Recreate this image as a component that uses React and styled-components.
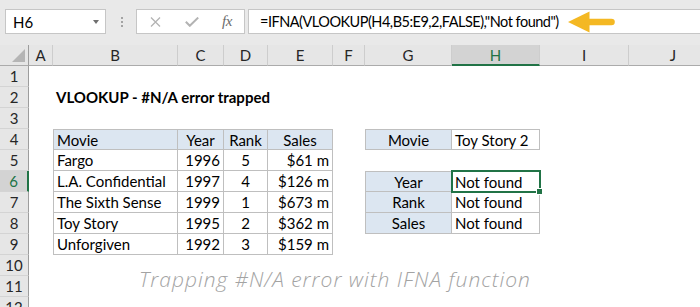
import React from "react";
import styled, { createGlobalStyle, css } from "styled-components";

const GREEN = "#217346";
const LINE = "#bfbfbf";
const HEAD_BG = "#dce6f1";

const GlobalStyle = createGlobalStyle`
  html, body { margin: 0; padding: 0; background: #fff; }
  body {
    width: 700px; height: 307px; overflow: hidden;
    font-family: Lato, "Noto Sans", sans-serif; color: #000;
  }
  #root { width: 700px; height: 307px; overflow: hidden; }
`;

const Window = styled.div`
  display: flex;
  flex-direction: column;
  width: 700px;
  height: 307px;
  overflow: hidden;
  background: #fff;
`;

const FormulaBar = styled.div`
  display: flex;
  align-items: flex-start;
  flex-shrink: 0;
  height: 45px;
  box-sizing: border-box;
  padding: 9px 0 0 5px;
  background: #e9e9e9;
`;

const NameBox = styled.div`
  display: flex;
  align-items: center;
  justify-content: space-between;
  width: 101px;
  height: 25px;
  box-sizing: border-box;
  padding: 0 6px 0 7px;
  border: 1px solid #c6c6c6;
  background: #fff;
  font-size: 15px;
`;

const Caret = styled.span`
  width: 0;
  height: 0;
  border-left: 3.5px solid transparent;
  border-right: 3.5px solid transparent;
  border-top: 4px solid #6f6f6f;
`;

const Grip = styled.div`
  display: flex;
  flex-direction: column;
  gap: 2px;
  margin: 8px 13px 0 15px;
`;

const GripDot = styled.span`
  width: 2px;
  height: 2px;
  background: #a3a3a3;
`;

const FxBox = styled.div`
  display: flex;
  align-items: center;
  width: 109px;
  height: 25px;
  box-sizing: border-box;
  padding-left: 13px;
  gap: 24px;
  border: 1px solid #c6c6c6;
  background: #fff;
  & > :last-child { margin-left: -1px; }
`;

const FxLabel = styled.span`
  font-family: "Liberation Serif", serif;
  font-style: italic;
  font-size: 15px;
  color: #6b6b6b;
  letter-spacing: -0.5px;
`;

const FormulaInput = styled.div`
  display: flex;
  align-items: center;
  gap: 9px;
  flex: 1;
  height: 25px;
  box-sizing: border-box;
  margin-left: 3px;
  padding-left: 11px;
  border: 1px solid #c6c6c6;
  border-right: none;
  background: #fff;
  font-size: 14.5px;
  letter-spacing: -0.5px;
  white-space: nowrap;
`;

const Sheet = styled.div`
  display: grid;
  grid-template-columns: 29px 24px 125px 46px 44px 65px 32px 87px 88px 89px 89px;
  grid-template-rows: 21px repeat(12, 21px);
  font-size: 15px;
  line-height: 21px;
`;

const Corner = styled.div`
  background: #e6e6e6;
  border-right: 1px solid #9d9d9d;
  border-bottom: 1px solid #ababab;
  box-sizing: border-box;
  display: flex;
  align-items: flex-end;
  justify-content: flex-end;
  padding: 0 3px 3px 0;
`;

const CornerTri = styled.span`
  width: 0;
  height: 0;
  border-left: 13px solid transparent;
  border-bottom: 13px solid #b5b5b5;
`;

const ColHead = styled.div`
  box-sizing: border-box;
  background: ${(p) => (p.$selected ? "#d3d3d3" : "#e6e6e6")};
  color: ${(p) => (p.$selected ? GREEN : "#262626")};
  border-right: 1px solid #cdcdcd;
  border-bottom: ${(p) => (p.$selected ? `2px solid ${GREEN}` : "1px solid #ababab")};
  text-align: center;
  line-height: 20px;
`;

const RowHead = styled.div`
  box-sizing: border-box;
  background: ${(p) => (p.$selected ? "#d3d3d3" : "#e6e6e6")};
  color: ${(p) => (p.$selected ? GREEN : "#262626")};
  border-right: ${(p) => (p.$selected ? `2px solid ${GREEN}` : "1px solid #9d9d9d")};
  border-bottom: 1px solid #d4d4d4;
  text-align: center;
  line-height: 21px;
`;

const Cell = styled.div`
  position: relative;
  box-sizing: border-box;
  padding: 0 3px;
  white-space: nowrap;
  background: ${(p) => (p.$head ? HEAD_BG : "#fff")};
  text-align: ${(p) => p.$align || "left"};
  font-weight: ${(p) => (p.$bold ? 700 : 400)};
  ${(p) =>
    p.$boxed &&
    css`
      border-right: 1px solid ${LINE};
      border-bottom: 1px solid ${LINE};
    `}
  ${(p) => p.$top && css`border-top: 1px solid ${LINE}; line-height: 20px;`}
  ${(p) => p.$left && css`border-left: 1px solid ${LINE};`}
  ${(p) => p.$selected && css`z-index: 2;`}
  ${(p) => p.$spill && css`overflow: visible; z-index: 1;`}
`;

const Selection = styled.span`
  position: absolute;
  top: -2px;
  left: -1px;
  right: -2px;
  bottom: -2px;
  border: 2px solid ${GREEN};
  pointer-events: none;
`;

const FillHandle = styled.span`
  position: absolute;
  right: -4px;
  bottom: -4px;
  width: 5px;
  height: 5px;
  background: ${GREEN};
  border: 1px solid #fff;
`;

const Caption = styled.span`
  display: block;
  margin-top: -7px;
  padding-left: 83px;
  font-family: "Open Sans", "Noto Sans", sans-serif;
  font-style: italic;
  font-weight: 300;
  font-size: 21px;
  letter-spacing: 1px;
  line-height: 21px;
  color: #a3a3a3;
`;

const COLS = ["A", "B", "C", "D", "E", "F", "G", "H", "I", "J"];

const movies = [
  ["Fargo", "1996", "5", "$61 m"],
  ["L.A. Confidential", "1997", "4", "$126 m"],
  ["The Sixth Sense", "1999", "1", "$673 m"],
  ["Toy Story", "1995", "2", "$362 m"],
  ["Unforgiven", "1992", "3", "$159 m"],
];

const tables = [
  { c1: 1, c2: 4, r1: 4, r2: 9 },
  { c1: 6, c2: 7, r1: 4, r2: 4 },
  { c1: 6, c2: 7, r1: 6, r2: 8 },
];

const data = {
  2: { B: { text: "VLOOKUP - #N/A error trapped", bold: true, spill: true } },
  4: {
    B: { text: "Movie", head: true },
    C: { text: "Year", head: true, align: "center" },
    D: { text: "Rank", head: true, align: "center" },
    E: { text: "Sales", head: true, align: "center" },
    G: { text: "Movie", head: true, align: "center" },
    H: { text: "Toy Story 2" },
  },
  11: { B: { caption: "Trapping #N/A error with IFNA function", spill: true } },
};
movies.forEach((m, i) => {
  data[5 + i] = {
    B: { text: m[0] },
    C: { text: m[1], align: "right" },
    D: { text: m[2], align: "center" },
    E: { text: m[3], align: "right" },
  };
});
["Year", "Rank", "Sales"].forEach((label, i) => {
  data[6 + i].G = { text: label, head: true, align: "center" };
  data[6 + i].H = { text: "Not found", selected: i === 0 };
});

function tableFor(ci, r) {
  return tables.find((t) => ci >= t.c1 && ci <= t.c2 && r >= t.r1 && r <= t.r2);
}

const XIcon = () => (
  <svg width="11" height="10" viewBox="0 0 11 10">
    <path d="M1 0.5 L10 9.5 M10 0.5 L1 9.5" stroke="#b3b3b3" strokeWidth="1.3" fill="none" />
  </svg>
);

const CheckIcon = () => (
  <svg width="14" height="10" viewBox="0 0 14 10">
    <path d="M0.8 4.8 L4.8 8.8 L13.2 0.6" stroke="#b3b3b3" strokeWidth="2" fill="none" />
  </svg>
);

const Arrow = () => (
  <svg width="47" height="22" viewBox="0 0 47 22">
    <path d="M0 11 L21.5 0.5 L21.5 21.5 Z" fill="#f4b823" />
    <line x1="20" y1="11" x2="43.5" y2="11" stroke="#f4b823" strokeWidth="6.6" strokeLinecap="round" />
  </svg>
);

export default function App() {
  const rows = Array.from({ length: 12 }, (_, i) => i + 1);
  return (
    <Window>
      <GlobalStyle />
      <FormulaBar>
        <NameBox>
          H6
          <Caret />
        </NameBox>
        <Grip>
          <GripDot />
          <GripDot />
          <GripDot />
        </Grip>
        <FxBox>
          <XIcon />
          <CheckIcon />
          <FxLabel>fx</FxLabel>
        </FxBox>
        <FormulaInput>
          =IFNA(VLOOKUP(H4,B5:E9,2,FALSE),"Not found")
          <Arrow />
        </FormulaInput>
      </FormulaBar>
      <Sheet>
        <Corner>
          <CornerTri />
        </Corner>
        {COLS.map((c) => (
          <ColHead key={c} $selected={c === "H"}>
            {c}
          </ColHead>
        ))}
        {rows.map((r) => (
          <React.Fragment key={r}>
            <RowHead $selected={r === 6}>{r}</RowHead>
            {COLS.map((c, ci) => {
              const cell = (data[r] && data[r][c]) || {};
              const t = tableFor(ci, r);
              return (
                <Cell
                  key={c}
                  $head={cell.head}
                  $align={cell.align}
                  $bold={cell.bold}
                  $spill={cell.spill}
                  $selected={cell.selected}
                  $boxed={!!t}
                  $top={t && r === t.r1}
                  $left={t && ci === t.c1}
                >
                  {cell.text}
                  {cell.caption && <Caption>{cell.caption}</Caption>}
                  {cell.selected && (
                    <Selection>
                      <FillHandle />
                    </Selection>
                  )}
                </Cell>
              );
            })}
          </React.Fragment>
        ))}
      </Sheet>
    </Window>
  );
}
